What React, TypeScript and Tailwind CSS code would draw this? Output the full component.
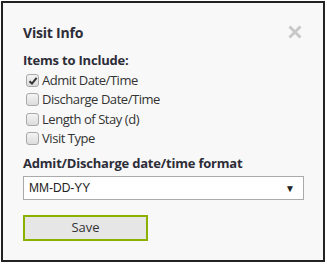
import React from "react";

function Box({ checked }: { checked?: boolean }) {
  return (
    <span className="relative inline-block w-[13px] h-[13px] rounded-[3px] border border-[#a9a9a9] bg-gradient-to-b from-[#f4f4f4] to-[#dcdcdc] shrink-0">
      {checked && (
        <svg className="absolute left-[1px] top-[1px]" width="10" height="10" viewBox="0 0 10 10">
          <path d="M1.5 5.2 L4 7.6 L8.6 1.8" fill="none" stroke="#333" strokeWidth="2" />
        </svg>
      )}
    </span>
  );
}

function Row({ label, checked }: { label: string; checked?: boolean }) {
  return (
    <div className="h-[19.3px] flex items-center pl-[3px] gap-[3px]">
      <Box checked={checked} />
      <span className="text-[13px] text-[#333] tracking-[-0.45px]">{label}</span>
    </div>
  );
}

export default function App() {
  return (
    <div className="w-[327px] h-[266px] bg-white p-px" style={{ fontFamily: '"Open Sans", sans-serif' }}>
      <div className="w-[324px] h-[261px] border-2 border-[#222] bg-[#f8f8f8] pl-[20px] pr-[20px] pt-[19px]">
        <div className="h-[20px] flex items-center justify-between">
          <span className="text-[14px] font-bold text-[#2d2d38] tracking-[-0.2px]">Visit Info</span>
          <svg width="14" height="14" viewBox="0 0 14 14" className="mr-[1px]">
            <path d="M1.5 1.5 L12.5 12.5 M12.5 1.5 L1.5 12.5" stroke="#c9c9c9" strokeWidth="3" />
          </svg>
        </div>
        <div className="mt-[9px] h-[20px] flex items-center text-[13px] font-bold text-[#2d2d38] tracking-[-0.2px]">
          Items to Include:
        </div>
        <Row label="Admit Date/Time" checked />
        <Row label="Discharge Date/Time" />
        <Row label="Length of Stay (d)" />
        <Row label="Visit Type" />
        <div className="mt-[7px] h-[18px] flex items-center text-[13px] font-bold text-[#2d2d38] tracking-[-0.2px]">
          Admit/Discharge date/time format
        </div>
        <div className="mt-[3px] w-[281px] h-[24px] border border-[#aaa] bg-white flex items-center justify-between pl-[5px] pr-[8px]">
          <span className="text-[12px] text-[#222]" style={{ fontFamily: '"Liberation Sans", Arial, sans-serif' }}>MM-DD-YY</span>
          <span className="text-[10px] text-[#222]">▼</span>
        </div>
        <div className="mt-[15px] w-[125px] h-[26px] border-2 border-[#8cb000] bg-[#e6e6e6] flex items-center justify-center text-[13px] text-[#333]">
          Save
        </div>
      </div>
    </div>
  );
}
